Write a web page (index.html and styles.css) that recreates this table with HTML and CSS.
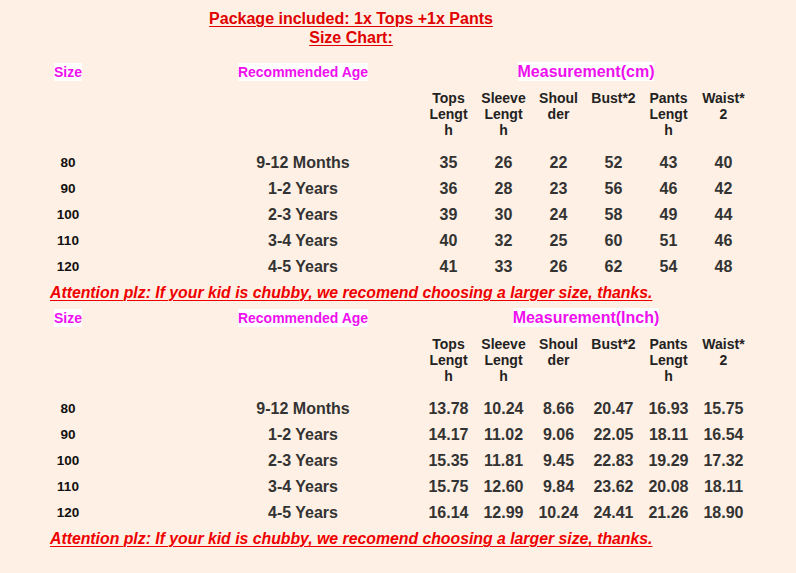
FILE: index.html
```html
<!DOCTYPE html>
<html>
<head>
<meta charset="utf-8">
<link rel="stylesheet" href="styles.css">
</head>
<body>
<div class="page">
  <div class="title">
    <div><u>Package included: 1x Tops +1x Pants</u></div>
    <div><u>Size Chart:</u></div>
  </div>

  <div class="chart first">
    <div class="hd size"><span class="hl">Size</span></div>
    <div class="hd age"><span class="hl">Recommended Age</span></div>
    <div class="hd meas"><span class="hl">Measurement(cm)</span></div>

    <div class="ch size"></div>
    <div class="ch age"></div>
    <div class="ch">Tops<br>Lengt<br>h</div>
    <div class="ch">Sleeve<br>Lengt<br>h</div>
    <div class="ch">Shoul<br>der</div>
    <div class="ch">Bust*2</div>
    <div class="ch">Pants<br>Lengt<br>h</div>
    <div class="ch">Waist*<br>2</div>

    <div class="c size">80</div><div class="c age">9-12 Months</div><div class="c">35</div><div class="c">26</div><div class="c">22</div><div class="c">52</div><div class="c">43</div><div class="c">40</div>
    <div class="c size">90</div><div class="c age">1-2 Years</div><div class="c">36</div><div class="c">28</div><div class="c">23</div><div class="c">56</div><div class="c">46</div><div class="c">42</div>
    <div class="c size">100</div><div class="c age">2-3 Years</div><div class="c">39</div><div class="c">30</div><div class="c">24</div><div class="c">58</div><div class="c">49</div><div class="c">44</div>
    <div class="c size">110</div><div class="c age">3-4 Years</div><div class="c">40</div><div class="c">32</div><div class="c">25</div><div class="c">60</div><div class="c">51</div><div class="c">46</div>
    <div class="c size">120</div><div class="c age">4-5 Years</div><div class="c">41</div><div class="c">33</div><div class="c">26</div><div class="c">62</div><div class="c">54</div><div class="c">48</div>

    <div class="note"><u>Attention plz: If your kid is chubby, we recomend choosing a larger size, thanks.</u></div>
  </div>

  <div class="chart">
    <div class="hd size"><span class="hl">Size</span></div>
    <div class="hd age"><span class="hl">Recommended Age</span></div>
    <div class="hd meas"><span class="hl">Measurement(Inch)</span></div>

    <div class="ch size"></div>
    <div class="ch age"></div>
    <div class="ch">Tops<br>Lengt<br>h</div>
    <div class="ch">Sleeve<br>Lengt<br>h</div>
    <div class="ch">Shoul<br>der</div>
    <div class="ch">Bust*2</div>
    <div class="ch">Pants<br>Lengt<br>h</div>
    <div class="ch">Waist*<br>2</div>

    <div class="c size">80</div><div class="c age">9-12 Months</div><div class="c">13.78</div><div class="c">10.24</div><div class="c">8.66</div><div class="c">20.47</div><div class="c">16.93</div><div class="c">15.75</div>
    <div class="c size">90</div><div class="c age">1-2 Years</div><div class="c">14.17</div><div class="c">11.02</div><div class="c">9.06</div><div class="c">22.05</div><div class="c">18.11</div><div class="c">16.54</div>
    <div class="c size">100</div><div class="c age">2-3 Years</div><div class="c">15.35</div><div class="c">11.81</div><div class="c">9.45</div><div class="c">22.83</div><div class="c">19.29</div><div class="c">17.32</div>
    <div class="c size">110</div><div class="c age">3-4 Years</div><div class="c">15.75</div><div class="c">12.60</div><div class="c">9.84</div><div class="c">23.62</div><div class="c">20.08</div><div class="c">18.11</div>
    <div class="c size">120</div><div class="c age">4-5 Years</div><div class="c">16.14</div><div class="c">12.99</div><div class="c">10.24</div><div class="c">24.41</div><div class="c">21.26</div><div class="c">18.90</div>

    <div class="note"><u>Attention plz: If your kid is chubby, we recomend choosing a larger size, thanks.</u></div>
  </div>
</div>
</body>
</html>
```

FILE: styles.css
```css
html, body {
  margin: 0;
  padding: 0;
  background: #fef0e4;
}
body {
  font-family: "Liberation Sans", Arial, sans-serif;
  width: 796px;
  height: 573px;
  overflow: hidden;
}
.page {
  padding-top: 9px;
}
.title {
  width: 702px;
  text-align: center;
  color: #e00000;
  font-weight: bold;
  font-size: 16px;
  line-height: 19px;
}
.title u {
  text-decoration-thickness: 1px;
  text-underline-offset: 2px;
}
.chart {
  display: grid;
  grid-template-columns: 185px 236px repeat(6, 55px);
  grid-template-rows: 26px 65px;
  grid-auto-rows: 26px;
}
.chart.first {
  margin-top: 12px;
  margin-bottom: -1px;
}
.hd {
  font-weight: bold;
  line-height: 26px;
  text-align: center;
  color: #ee10ee;
  font-size: 14px;
}
.hd .hl {
  background: #ffffff;
  padding: 1px 0;
}
.hd.size {
  padding-right: 49px;
}
.hd.meas {
  grid-column: 3 / span 6;
  font-size: 16px;
}
.ch {
  grid-row: 2;
  box-sizing: border-box;
  padding-top: 5px;
  font-size: 14px;
  line-height: 16px;
  font-weight: bold;
  text-align: center;
  color: #222;
}
.c {
  font-size: 16px;
  font-weight: bold;
  line-height: 26px;
  text-align: center;
  color: #333;
}
.c.size {
  font-size: 13.5px;
  color: #111;
  padding-right: 49px;
}
.note {
  grid-column: 1 / -1;
  padding-left: 50px;
  color: #ee0000;
  font-size: 15.8px;
  font-weight: bold;
  font-style: italic;
  line-height: 26px;
}
.note u {
  text-decoration-thickness: 1px;
  text-underline-offset: 2px;
}
```
